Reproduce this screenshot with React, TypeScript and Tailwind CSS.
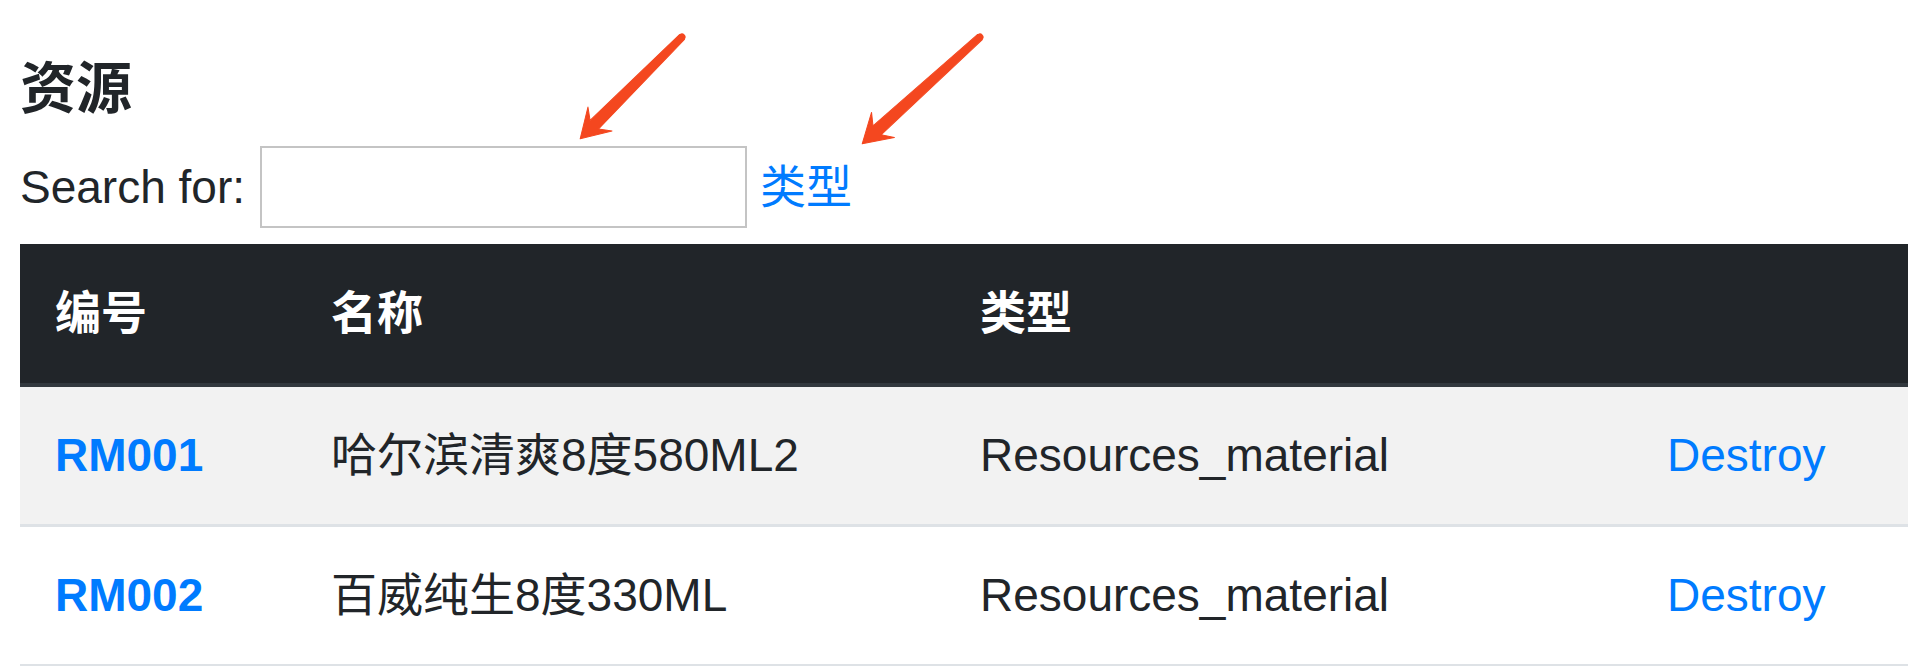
const rows = [
  { code: "RM001", name: "哈尔滨清爽8度580ML2", kind: "Resources_material" },
  { code: "RM002", name: "百威纯生8度330ML", kind: "Resources_material" },
];

const cols = "grid grid-cols-[276px_649px_687px_276px] items-center";

// red annotation arrow, drawn along +x then rotated into place
function Arrow({ x, y, len, angle }: { x: number; y: number; len: number; angle: number }) {
  const L = len;
  const pts = `0,-3.5 ${L - 20},-6 ${L - 28},-17 ${L},0 ${L - 28},17 ${L - 20},6 0,3.5`;
  return (
    <g transform={`translate(${x} ${y}) rotate(${angle})`}>
      <circle cx="0" cy="0" r="3.5" fill="#f4471f" />
      <polygon points={pts} fill="#f4471f" strokeLinejoin="round" stroke="#f4471f" strokeWidth="1" />
    </g>
  );
}

export default function App() {
  return (
    <div
      className="relative w-[1920px] h-[666px] bg-white overflow-hidden pl-[20px] text-[#212529]"
      style={{ fontFamily: "'Liberation Sans', 'Noto Sans CJK SC', sans-serif" }}
    >
      <h1 className="pt-[55px] text-[56px] leading-[67px] font-semibold">资源</h1>

      <div className="mt-[24px] flex items-center h-[82px] text-[46px]">
        <span>Search for:</span>
        <input className="ml-[15px] w-[487px] h-[82px] border-2 border-[#c4c4c4] bg-white outline-none" />
        <a className="ml-[13px] text-[#007bff]" href="#">类型</a>
      </div>

      <div className="mt-[16px] w-[1888px] text-[46px] leading-[69px]">
        <div className={`${cols} h-[143px] bg-[#212529] border-b-4 border-[#32383e] text-white font-bold`}>
          <div className="pl-[35px]">编号</div>
          <div className="pl-[35px]">名称</div>
          <div className="pl-[35px]">类型</div>
          <div />
        </div>
        {rows.map((r, i) => (
          <div
            key={r.code}
            className={`${cols} h-[140px] border-b-[3px] border-[#dee2e6] ${i % 2 === 0 ? "bg-[#f2f2f2]" : "bg-white"}`}
          >
            <div className="pl-[35px]">
              <a href="#" className="text-[#007bff] font-bold">{r.code}</a>
            </div>
            <div className="pl-[35px]">{r.name}</div>
            <div className="pl-[35px]">{r.kind}</div>
            <div className="pl-[35px]">
              <a href="#" className="text-[#007bff]">Destroy</a>
            </div>
          </div>
        ))}
      </div>

      <svg className="absolute left-0 top-0 pointer-events-none" width="1920" height="200">
        <Arrow x={682} y={37} len={144} angle={135} />
        <Arrow x={980} y={37} len={159} angle={137.8} />
      </svg>
    </div>
  );
}
